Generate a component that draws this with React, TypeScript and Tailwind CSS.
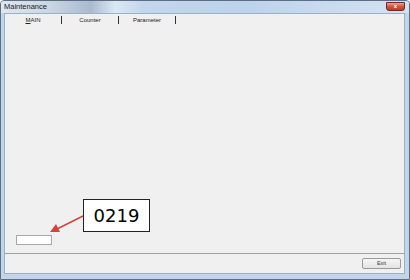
import React from 'react';

const tabs = ['MAIN', 'Counter', 'Parameter'];

const App: React.FC = () => {
  return (
    <div className="relative w-[410px] h-[280px] overflow-hidden bg-[#c3d5ea] border border-[#5f6f82] rounded-t-[4px] flex flex-col font-['Liberation_Sans',Arial,sans-serif]">
      {/* title bar */}
      <div className="h-[12px] shrink-0 flex items-center pl-[3px] bg-[linear-gradient(90deg,#dfe7f0_0%,#cad6e4_12%,#a9bad0_22%,#dbe8f5_28%,#c2d6ec_35%,#bcd3ec_60%,#c8dbef_80%,#d2e2f2_100%)]">
        <span className="text-[7.5px] leading-none text-[#1b1b1b]">Maintenance</span>
        <div className="ml-auto mr-[4px] mt-[-2px] w-[19px] h-[9px] rounded-b-[3px] border border-[#6b2a24] bg-[linear-gradient(180deg,#e8a598_0%,#d2553f_50%,#c23a25_100%)] flex items-center justify-center">
          <span className="text-[6px] leading-none font-bold text-white">x</span>
        </div>
      </div>

      {/* client area */}
      <div className="flex-1 ml-[3px] mr-[4px] border border-[#9fb0c4] bg-[#f0f0f0] flex flex-col">
        <div className="h-[11px] flex items-center">
          {tabs.map((t) => (
            <div key={t} className="w-[57px] h-full flex items-center">
              <span className="flex-1 text-center text-[6px] leading-none text-[#222]">
                {t === 'MAIN' ? <span className="underline">M</span> : t[0]}
                {t.slice(1)}
              </span>
              <span className="w-[1px] h-[8px] bg-[#333]" />
            </div>
          ))}
        </div>

        <div className="flex-1 flex items-end pl-[11px] pb-[8px]">
          <div className="w-[36px] h-[10px] bg-white border border-[#a9a9a9]" />
        </div>

        <div className="h-[20px] border-t border-[#a0a0a0] flex items-center justify-end pr-[3px]">
          <button className="w-[39px] h-[11px] bg-[linear-gradient(180deg,#f6f6f6,#e3e3e3)] border border-[#9a9a9a] rounded-[2px] text-[5.5px] leading-none text-[#333]">
            Exit
          </button>
        </div>
      </div>

      {/* bottom frame */}
      <div className="h-[5px] shrink-0" />

      {/* annotation callout */}
      <div className="absolute left-[82px] top-[198px] w-[67px] h-[33px] bg-white border border-[#222] flex items-center justify-center">
        <span className="text-[18px] leading-none text-black font-['DejaVu_Sans',sans-serif]">0219</span>
      </div>
      <svg className="absolute left-0 top-0" width="410" height="280" viewBox="0 0 410 280">
        <line x1="82" y1="215" x2="56" y2="228" stroke="#d0443c" strokeWidth="1.4" />
        <polygon points="49,231 55,223 59,231" fill="#d0443c" />
      </svg>
    </div>
  );
};

export default App;
